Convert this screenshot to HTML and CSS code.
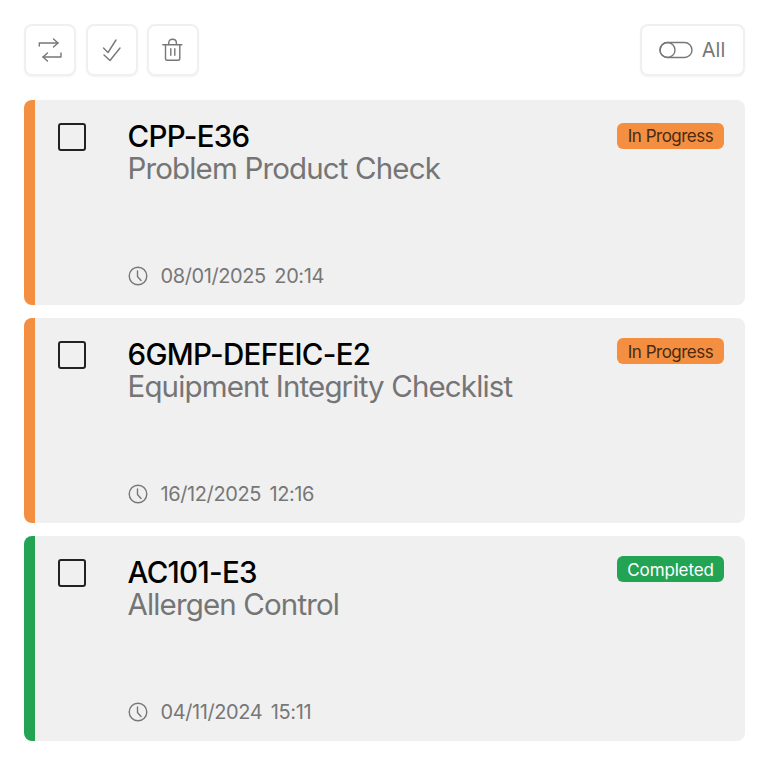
FILE: index.html
```html
<!DOCTYPE html>
<html lang="en">
<head>
  <meta charset="UTF-8" />
  <meta name="viewport" content="width=device-width, initial-scale=1" />
  <title>Checklists</title>
  <link rel="stylesheet" href="styles.css">
</head>
<body>
  <div class="toolbar">
    <button class="tool-btn" aria-label="Switch">
      <svg width="26" height="26" viewBox="0 0 26 26" fill="none" stroke="#777" stroke-width="1.4" stroke-linecap="round" stroke-linejoin="round">
        <path d="M2.3 9V6H21"/><path d="M16.5 2L21 6L16.5 10"/>
        <path d="M24 16V20H6"/><path d="M10.5 16L6 20L10.5 24"/>
      </svg>
    </button>
    <button class="tool-btn" aria-label="Select all">
      <svg width="26" height="26" viewBox="0 0 26 26" fill="none" stroke="#777" stroke-width="1.4" stroke-linecap="round" stroke-linejoin="round">
        <path d="M4.5 11L9 15.5L17 3"/><path d="M5 18L11 23.5L21 11"/>
      </svg>
    </button>
    <button class="tool-btn" aria-label="Delete">
      <svg width="26" height="26" viewBox="0 0 26 26" fill="none" stroke="#777" stroke-width="1.4" stroke-linecap="round" stroke-linejoin="round">
        <path d="M2.8 7.7H21.8"/><path d="M8.7 7.5V6C8.7 3.6 10.2 2.3 12.5 2.3C14.8 2.3 16.4 3.6 16.4 6V7.5"/>
        <path d="M5.5 8V21.5C5.5 22.6 6.2 23.3 7.3 23.3H18C19.1 23.3 19.8 22.6 19.8 21.5V8"/>
        <path d="M10.8 11.7V18.3"/><path d="M14.8 11.7V18.3"/>
      </svg>
    </button>
    <button class="tool-btn filter-btn">
      <svg width="34" height="18" viewBox="0 0 34 18" fill="none" stroke="#777" stroke-width="1.4">
        <rect x="1" y="1.5" width="32" height="15" rx="7.5"/><circle cx="8.5" cy="9" r="7.5"/>
      </svg>
      <span>All</span>
    </button>
  </div>

  <div class="list">
    <div class="card orange">
      <span class="checkbox"></span>
      <div class="card-body">
        <div class="card-title">CPP-E36</div>
        <div class="card-name">Problem Product Check</div>
        <div class="card-date">
          <svg width="20" height="20" viewBox="0 0 20 20" fill="none" stroke="#777" stroke-width="1.4" stroke-linecap="round" stroke-linejoin="round">
            <circle cx="10" cy="10" r="8.8"/><path d="M9.5 5V10.5L13 14.5"/>
          </svg>
          <span>08/01/2025</span><span>20:14</span>
        </div>
      </div>
      <span class="badge badge-progress badge-first">In Progress</span>
    </div>

    <div class="card orange">
      <span class="checkbox"></span>
      <div class="card-body">
        <div class="card-title">6GMP-DEFEIC-E2</div>
        <div class="card-name">Equipment Integrity Checklist</div>
        <div class="card-date">
          <svg width="20" height="20" viewBox="0 0 20 20" fill="none" stroke="#777" stroke-width="1.4" stroke-linecap="round" stroke-linejoin="round">
            <circle cx="10" cy="10" r="8.8"/><path d="M9.5 5V10.5L13 14.5"/>
          </svg>
          <span>16/12/2025</span><span>12:16</span>
        </div>
      </div>
      <span class="badge badge-progress">In Progress</span>
    </div>

    <div class="card green">
      <span class="checkbox"></span>
      <div class="card-body">
        <div class="card-title">AC101-E3</div>
        <div class="card-name">Allergen Control</div>
        <div class="card-date">
          <svg width="20" height="20" viewBox="0 0 20 20" fill="none" stroke="#777" stroke-width="1.4" stroke-linecap="round" stroke-linejoin="round">
            <circle cx="10" cy="10" r="8.8"/><path d="M9.5 5V10.5L13 14.5"/>
          </svg>
          <span>04/11/2024</span><span>15:11</span>
        </div>
      </div>
      <span class="badge badge-done">Completed</span>
    </div>
  </div>
</body>
</html>
```
FILE: styles.css
```css
* {
  box-sizing: border-box;
}
body {
  margin: 0;
  padding: 24px 25px 24px 24px;
  font-family: Inter, "Liberation Sans", sans-serif;
  background-color: #fff;
  color: #000;
}
.toolbar {
  display: flex;
  gap: 9.5px;
  margin-bottom: 24px;
}
.tool-btn {
  width: 52px;
  height: 52px;
  padding: 0;
  background: #fff;
  border: 2px solid #f0f0f0;
  border-radius: 8px;
  box-shadow: 0 1px 2px rgba(0, 0, 0, 0.05);
  display: flex;
  align-items: center;
  justify-content: center;
}
.filter-btn {
  width: 105px;
  margin-left: auto;
  gap: 9px;
  padding-right: 1px;
  font-family: inherit;
  font-size: 20px;
  color: #777;
}
.list {
  display: flex;
  flex-direction: column;
  gap: 13px;
}
.card {
  height: 205px;
  background: #f0f0f0;
  border-radius: 8px;
  display: flex;
  align-items: flex-start;
  padding: 23px 21px 0 23px;
  border-left: 11px solid;
}
.orange {
  border-left-color: #f48f42;
}
.green {
  border-left-color: #23a455;
}
.checkbox {
  width: 28px;
  height: 28px;
  flex: none;
  border: 2px solid #222;
  border-radius: 3px;
  margin-right: 41.5px;
}
.card-body {
  flex: 1;
  display: flex;
  flex-direction: column;
  height: 168px;
  margin-top: -3px;
}
.card-title {
  font-size: 29.5px;
  line-height: 32px;
  font-weight: 550;
  letter-spacing: -0.7px;
}
.card-name {
  font-size: 29.5px;
  line-height: 32px;
  color: #757575;
  letter-spacing: -0.85px;
}
.card-date {
  margin-top: auto;
  display: flex;
  align-items: center;
  gap: 8.5px;
  font-size: 20px;
  line-height: 24px;
  color: #777;
  letter-spacing: -0.4px;
}
.card-date svg {
  margin-right: 4.5px;
}
.badge {
  flex: none;
  height: 26px;
  width: 107px;
  margin-top: -3px;
  border-radius: 6px;
  font-size: 17px;
  line-height: 28px;
  text-align: center;
  letter-spacing: -0.5px;
}
.badge-first {
  margin-top: 0;
  line-height: 27px;
}
.badge-progress {
  background: #f48f42;
  color: #4a2a10;
}
.badge-done {
  background: #23a455;
  color: #fff;
  letter-spacing: -0.15px;
}
```
